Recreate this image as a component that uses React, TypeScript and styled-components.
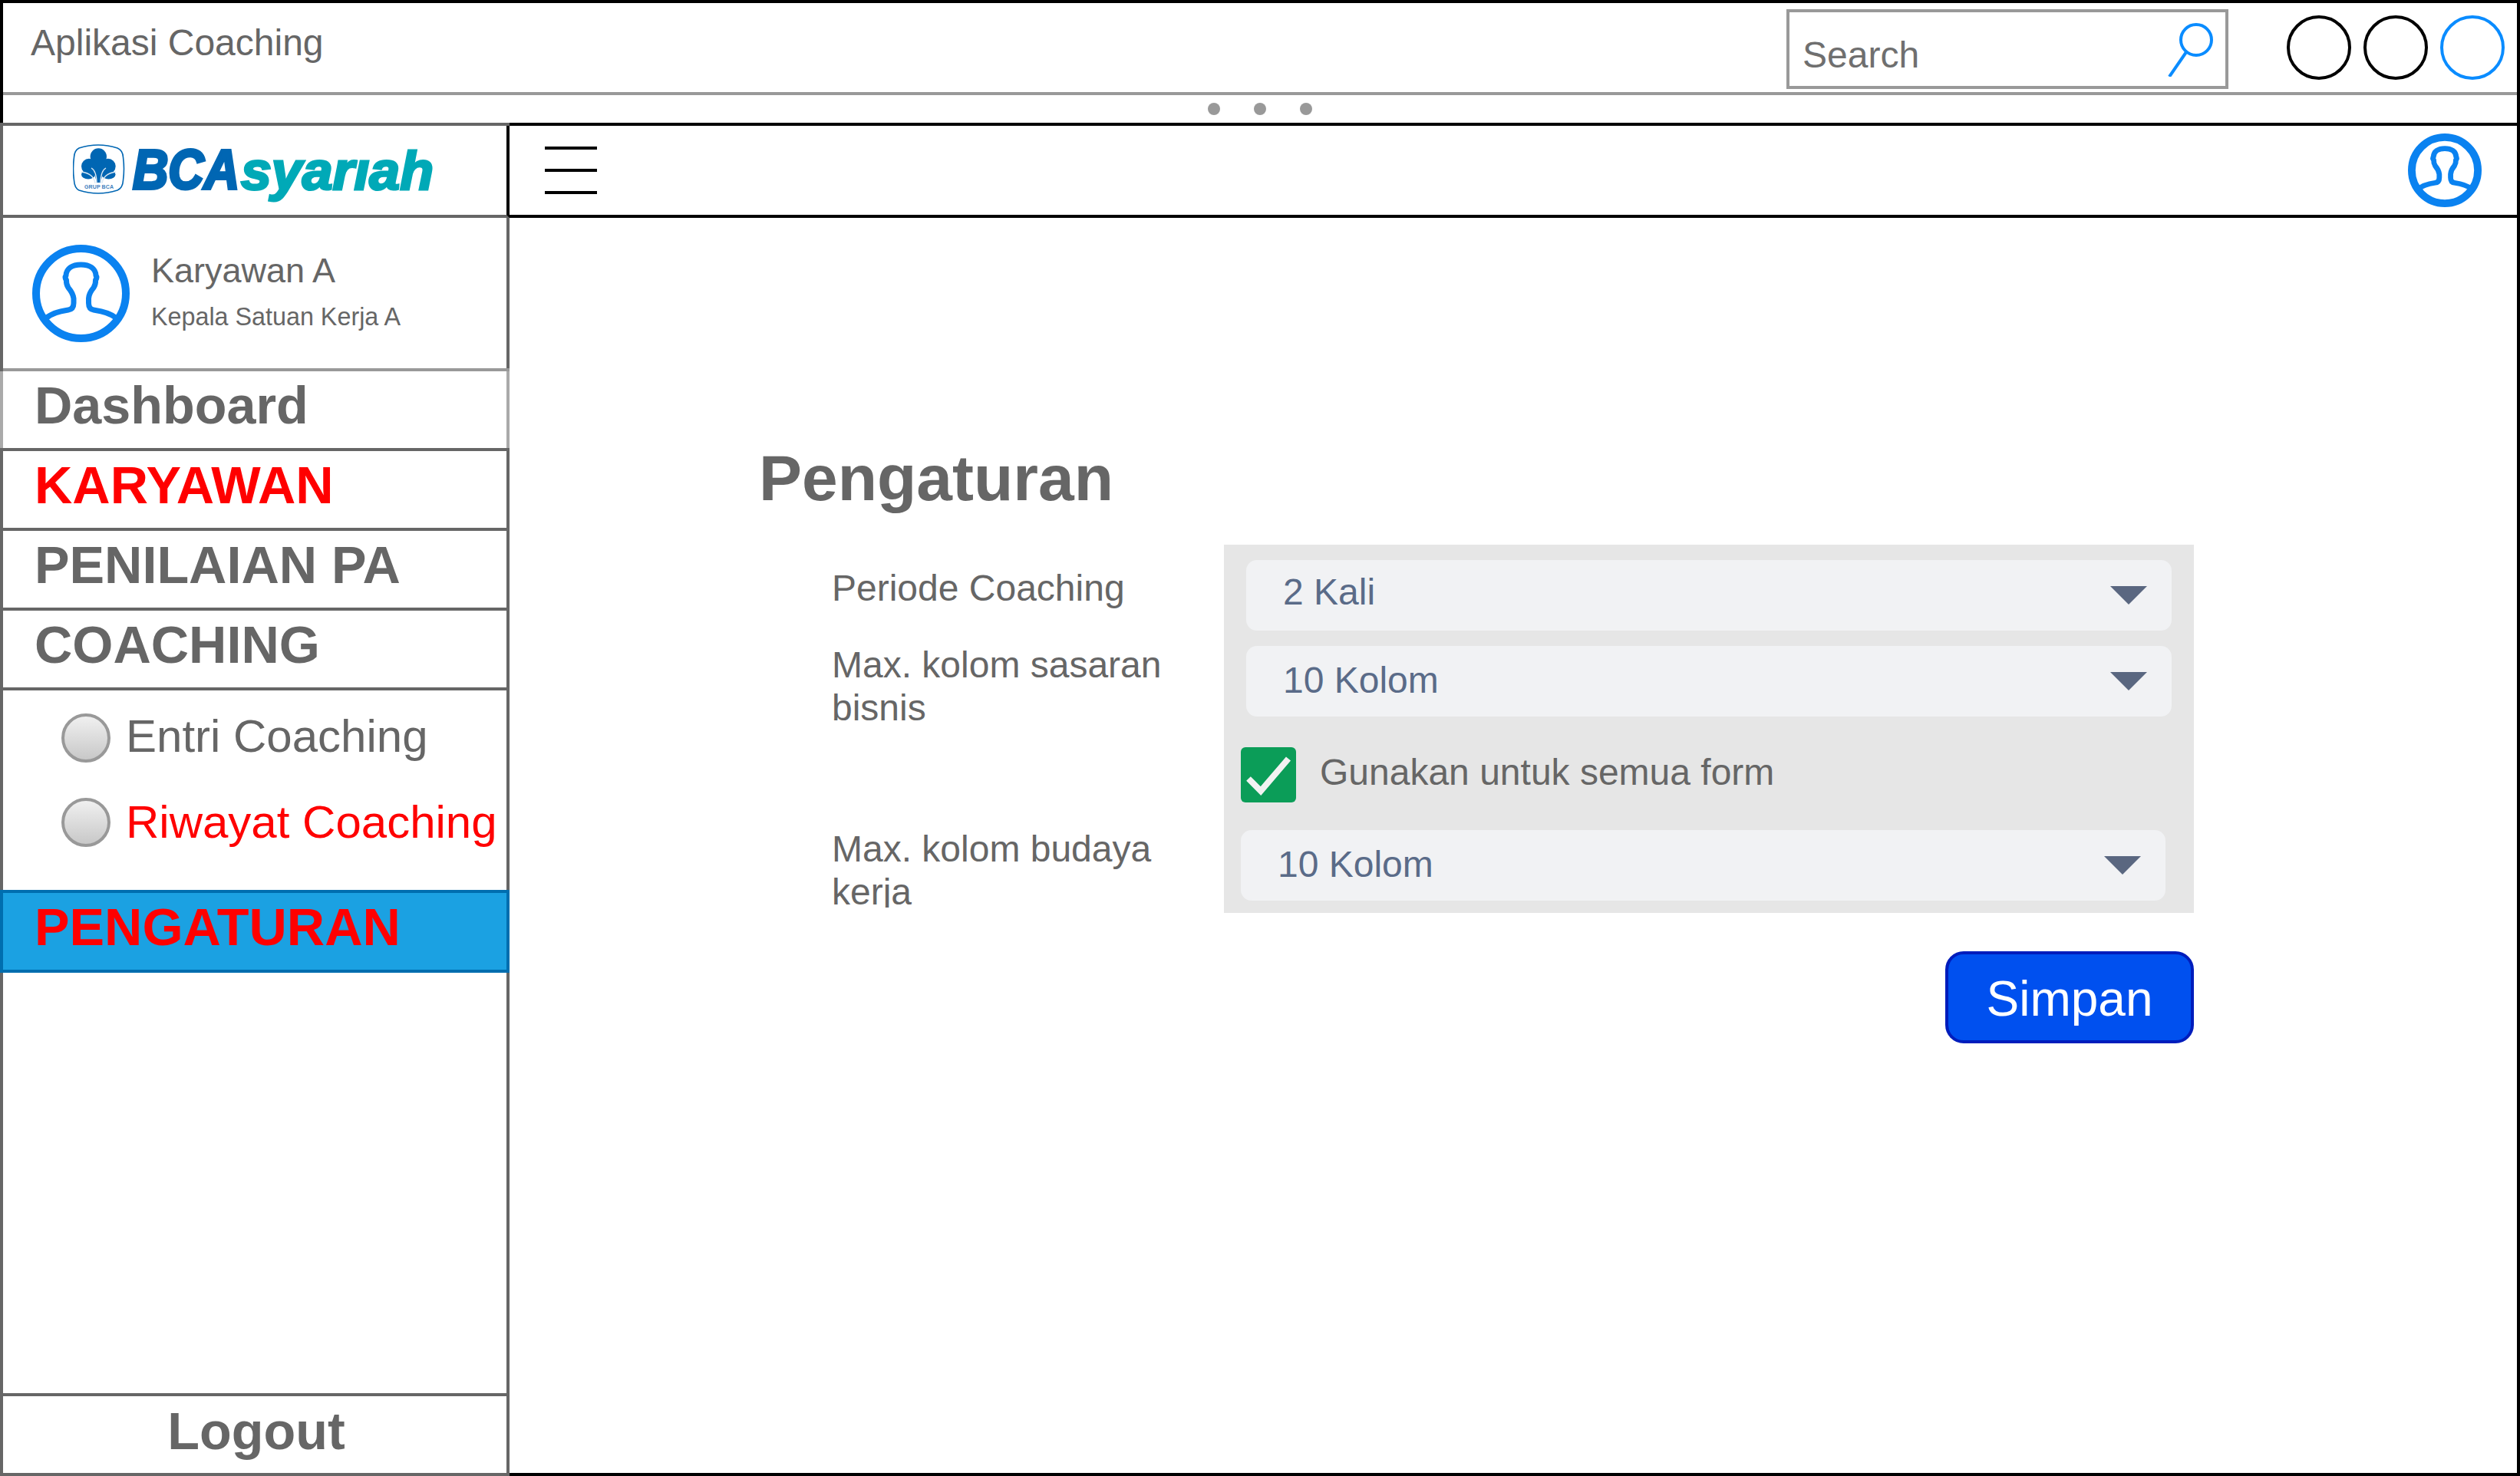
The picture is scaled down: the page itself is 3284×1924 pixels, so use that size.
import React from "react";
import styled, { createGlobalStyle } from "styled-components";

const GlobalStyle = createGlobalStyle`
  * {
    box-sizing: border-box;
  }

  html,
  body {
    margin: 0;
    padding: 0;
    background: #fff;
    font-family: "Liberation Sans", Arial, sans-serif;
    color: #666;
  }
`;

const UserIcon: React.FC<{ size: number; $heavy?: boolean }> = ({ size, $heavy }) => (
  <svg width={size} height={size} viewBox="0 0 127 127" fill="none" stroke="#0a82f0">
    <circle cx="63.5" cy="63.5" r={$heavy ? 57 : 58.5} strokeWidth={$heavy ? 13 : 10} />
    <path
      strokeWidth={$heavy ? 9 : 7}
      strokeLinejoin="round"
      d="M18 96 Q26 88 47 85 Q54 84 54 76 L54 70 Q53 63 47 56 Q44 51 44.5 46 Q42 43 44 40 C44.5 31 52 26 63.5 26 C75 26 82.5 31 83 40 Q85 43 82.5 46 Q83 51 80 56 Q74 63 73.5 70 L73.5 76 Q73.5 84 80 85 Q101 88 110 96"
    />
  </svg>
);

const SearchIcon: React.FC = () => (
  <svg width="60" height="72" viewBox="0 0 60 72" fill="none" stroke="#0a8cff" strokeWidth="4">
    <circle cx="38" cy="24" r="20" />
    <path d="M25 40 L3 72" />
  </svg>
);

const Logo: React.FC = () => (
  <svg width="475" height="84" viewBox="0 0 475 84">
    <path
      d="M8 5 Q33 -3 58 5 Q65 8 65.5 17 Q67.5 32 65.5 47 Q65 57 58 60 Q33 68 8 60 Q2 57 1.5 47 Q-0.5 32 1.5 17 Q2 8 8 5 Z"
      fill="#fff"
      stroke="#0066b3"
      strokeWidth="1.6"
    />
    <g fill="#0066b3">
      <circle cx="33.3" cy="16" r="10.7" />
      <circle cx="21" cy="28.7" r="10" />
      <circle cx="45.7" cy="28.7" r="10" />
      <ellipse cx="20" cy="39.5" rx="9" ry="6" />
      <ellipse cx="46.5" cy="39.5" rx="9" ry="6" />
      <path d="M25 26 L42 26 L36 50 L31 50 Z" />
    </g>
    <g fill="none" stroke="#dbe8f3" strokeWidth="1.3">
      <path d="M31 51 Q31 35 24 31" />
      <path d="M36 51 Q36 35 43 31" />
      <path d="M29 51 Q27 38 11 36" />
      <path d="M38 51 Q40 38 56 36" />
    </g>
    <text
      x="15"
      y="58"
      fontFamily="Liberation Sans"
      fontWeight="700"
      fontSize="7"
      fill="#3f80bd"
      textLength="38"
    >
      GRUP BCA
    </text>
    <text
      x="78"
      y="58"
      fontFamily="Liberation Sans"
      fontWeight="700"
      fontStyle="italic"
      fontSize="73"
      fill="#0066b3"
      stroke="#0066b3"
      strokeWidth="4"
      textLength="139"
      lengthAdjust="spacingAndGlyphs"
    >
      BCA
    </text>
    <text
      x="219"
      y="59"
      fontFamily="Liberation Sans"
      fontWeight="700"
      fontStyle="italic"
      fontSize="70"
      fill="#00a9b7"
      stroke="#00a9b7"
      strokeWidth="3"
      textLength="251"
      lengthAdjust="spacingAndGlyphs"
    >
      syarıah
    </text>
  </svg>
);

const menu = [
  { label: "Dashboard", plain: true },
  { label: "KARYAWAN", red: true },
  { label: "PENILAIAN PA" },
  { label: "COACHING" },
];

const subMenu = [
  { label: "Entri Coaching", lift: 5 },
  { label: "Riwayat Coaching", lift: 2, red: true },
];

const selects = {
  periode: "2 Kali",
  sasaran: "10 Kolom",
  budaya: "10 Kolom",
};

export default function App() {
  return (
    <Page>
      <GlobalStyle />
      <TitleBar>
        <AppTitle>Aplikasi Coaching</AppTitle>
        <SearchBox>
          <SearchText>Search</SearchText>
          <SearchIcon />
        </SearchBox>
        <WindowButtons>
          <WindowButton />
          <WindowButton />
          <WindowButton $accent />
        </WindowButtons>
      </TitleBar>
      <DotsBar>
        <Dot />
        <Dot />
        <Dot />
      </DotsBar>
      <Main>
        <Sidebar>
          <LogoCell>
            <Logo />
          </LogoCell>
          <Profile>
            <UserIcon size={127} />
            <ProfileInfo>
              <ProfileName>Karyawan A</ProfileName>
              <ProfileRole>Kepala Satuan Kerja A</ProfileRole>
            </ProfileInfo>
          </Profile>
          {menu.map((item) => (
            <NavItem key={item.label} $red={item.red} $light={item.plain}>
              {item.label}
            </NavItem>
          ))}
          <SubMenu>
            {subMenu.map((item) => (
              <SubItem key={item.label} $red={item.red}>
                <Radio />
                <SubLabel $lift={item.lift}>{item.label}</SubLabel>
              </SubItem>
            ))}
          </SubMenu>
          <ActiveItem>PENGATURAN</ActiveItem>
          <Logout>
            <LogoutText>Logout</LogoutText>
          </Logout>
        </Sidebar>
        <Content>
          <Header>
            <Hamburger>
              <span />
              <span />
              <span />
            </Hamburger>
            <UserIcon size={96} $heavy />
          </Header>
          <Body>
            <Heading>Pengaturan</Heading>
            <Form>
              <Labels>
                <FieldLabel $height={100}>Periode Coaching</FieldLabel>
                <FieldLabel $height={240}>
                  Max. kolom sasaran
                  <br />
                  bisnis
                </FieldLabel>
                <FieldLabel $height={104}>
                  Max. kolom budaya
                  <br />
                  kerja
                </FieldLabel>
              </Labels>
              <Panel>
                <Select>
                  <SelectValue $lift={10}>{selects.periode}</SelectValue>
                  <Caret />
                </Select>
                <Select>
                  <SelectValue $lift={3}>{selects.sasaran}</SelectValue>
                  <Caret />
                </Select>
                <CheckRow>
                  <CheckBox>
                    <svg width="72" height="72" viewBox="0 0 72 72" fill="none">
                      <path d="M10 41 L26 57 L62 15" stroke="#f2f2f2" strokeWidth="8" />
                    </svg>
                  </CheckBox>
                  <CheckLabel>Gunakan untuk semua form</CheckLabel>
                </CheckRow>
                <Select $shifted>
                  <SelectValue $lift={3}>{selects.budaya}</SelectValue>
                  <Caret />
                </Select>
              </Panel>
            </Form>
            <Actions>
              <SaveButton>Simpan</SaveButton>
            </Actions>
          </Body>
        </Content>
      </Main>
    </Page>
  );
}

const Page = styled.div`
  display: flex;
  flex-direction: column;
  width: 3284px;
  height: 1924px;
  overflow: hidden;
  background: #fff;
`;

const TitleBar = styled.div`
  display: flex;
  align-items: flex-start;
  height: 120px;
  padding: 0 16px 0 36px;
  border: 4px solid #000;
  border-bottom: none;
`;

const AppTitle = styled.div`
  margin-top: 24px;
  font-size: 48px;
  line-height: 55px;
`;

const SearchBox = styled.div`
  display: flex;
  align-items: center;
  justify-content: space-between;
  width: 576px;
  height: 104px;
  margin: 8px 0 0 auto;
  padding: 0 16px 0 17px;
  border: 4px solid #999;
`;

const SearchText = styled.span`
  padding-top: 15px;
  font-size: 48px;
  color: #6f6f6f;
`;

const WindowButtons = styled.div`
  display: flex;
  gap: 16px;
  margin: 16px 0 0 76px;
`;

const WindowButton = styled.div<{ $accent?: boolean }>`
  width: 84px;
  height: 84px;
  border: 4px solid ${(p) => (p.$accent ? "#0a8cff" : "#000")};
  border-radius: 50%;
`;

const DotsBar = styled.div`
  display: flex;
  align-items: center;
  justify-content: center;
  gap: 44px;
  height: 40px;
  padding-top: 4px;
  border-left: 4px solid #000;
  border-right: 4px solid #000;
  box-shadow: inset 0 4px 0 #999;
`;

const Dot = styled.div`
  width: 16px;
  height: 16px;
  border-radius: 50%;
  background: #999;
`;

const Main = styled.div`
  display: flex;
  flex: 1;
  min-height: 0;
`;

const Sidebar = styled.aside`
  display: flex;
  flex-direction: column;
  width: 664px;
  border: 4px solid #666;
`;

const LogoCell = styled.div`
  height: 120px;
  margin-right: -4px;
  padding: 24px 0 0 91px;
  border-right: 4px solid #000;
  border-bottom: 4px solid #666;
`;

const Profile = styled.div`
  display: flex;
  align-items: center;
  gap: 28px;
  height: 200px;
  margin-right: -4px;
  padding-left: 38px;
  border-bottom: 4px solid #999;
  box-shadow: inset -4px 0 0 #666;
`;

const ProfileInfo = styled.div`
  padding-bottom: 3px;
`;

const ProfileName = styled.div`
  font-size: 45px;
  line-height: 50px;
`;

const ProfileRole = styled.div`
  margin-top: 15px;
  font-size: 32.3px;
  line-height: 40px;
`;

const NavItem = styled.div<{ $red?: boolean; $light?: boolean }>`
  display: flex;
  align-items: center;
  flex: none;
  height: 104px;
  margin: 0 ${(p) => (p.$light ? "-4px" : "0")};
  padding: 0 0 12px ${(p) => (p.$light ? "45px" : "41px")};
  border-bottom: 4px solid #666;
  box-shadow: ${(p) => (p.$light ? "inset 4px 0 0 #aaa, inset -4px 0 0 #aaa" : "none")};
  font-size: 68.3px;
  font-weight: 700;
  color: ${(p) => (p.$red ? "#f00" : "#666")};
`;

const SubMenu = styled.div`
  display: flex;
  flex-direction: column;
  gap: 46px;
  height: 260px;
  padding: 30px 0 0 76px;
`;

const SubItem = styled.div<{ $red?: boolean }>`
  display: flex;
  align-items: center;
  gap: 20px;
  height: 64px;
  font-size: 60px;
  white-space: nowrap;
  color: ${(p) => (p.$red ? "#f00" : "#666")};
`;

const SubLabel = styled.span<{ $lift: number }>`
  padding-bottom: ${(p) => p.$lift}px;
`;

const Radio = styled.span`
  flex: none;
  width: 64px;
  height: 64px;
  border: 4px solid #999;
  border-radius: 50%;
  background: linear-gradient(#f0f0f0, #c8c8c8);
`;

const ActiveItem = styled.div`
  display: flex;
  align-items: center;
  height: 108px;
  margin: 0 -4px;
  padding: 0 0 12px 41px;
  border: 4px solid #006eaf;
  background: #1ba1e2;
  font-size: 68.3px;
  font-weight: 700;
  color: #f00;
`;

const Logout = styled.div`
  display: flex;
  align-items: center;
  justify-content: center;
  height: 104px;
  margin-top: auto;
  padding: 0 0 10px 4px;
  border-top: 4px solid #666;
`;

const LogoutText = styled.span`
  font-size: 68.3px;
  font-weight: 700;
`;

const Content = styled.main`
  display: flex;
  flex: 1;
  flex-direction: column;
  border: 4px solid #000;
  border-left: none;
`;

const Header = styled.div`
  display: flex;
  align-items: center;
  justify-content: space-between;
  flex: none;
  height: 120px;
  padding: 0 46px;
  border-bottom: 4px solid #000;
`;

const Hamburger = styled.div`
  display: flex;
  flex-direction: column;
  gap: 25px;
  width: 68px;

  span {
    height: 4px;
    background: #000;
  }
`;

const Body = styled.div`
  width: 2195px;
  padding: 291px 0 0 325px;
`;

const Heading = styled.h1`
  margin: 0 0 39px;
  font-size: 84px;
  line-height: 96px;
  font-weight: 700;
`;

const Form = styled.div`
  display: flex;
`;

const Labels = styled.div`
  flex: 1;
  padding: 29px 0 0 95px;
`;

const FieldLabel = styled.div<{ $height: number }>`
  height: ${(p) => p.$height}px;
  overflow: hidden;
  font-size: 48px;
  line-height: 56px;
`;

const Panel = styled.div`
  display: flex;
  flex-direction: column;
  gap: 20px;
  width: 1264px;
  height: 480px;
  padding-top: 20px;
  background: #e6e6e6;
`;

const Select = styled.div<{ $shifted?: boolean }>`
  display: flex;
  align-items: center;
  justify-content: space-between;
  height: 92px;
  margin: ${(p) => (p.$shifted ? "0 37px 0 22px" : "0 29px")};
  padding: 0 32px 0 48px;
  border-radius: 14px;
  background: #f1f2f4;
`;

const SelectValue = styled.span<{ $lift: number }>`
  padding-bottom: ${(p) => p.$lift}px;
  font-size: 48px;
  color: #5a6b88;
`;

const Caret = styled.span`
  width: 0;
  height: 0;
  border-top: 24px solid #5a6780;
  border-left: 24px solid transparent;
  border-right: 24px solid transparent;
`;

const CheckRow = styled.div`
  display: flex;
  align-items: center;
  gap: 31px;
  height: 72px;
  margin: 20px 0 16px 22px;
`;

const CheckBox = styled.div`
  width: 72px;
  height: 72px;
  border-radius: 6px;
  background: #0b9d58;

  svg {
    display: block;
  }
`;

const CheckLabel = styled.span`
  padding-bottom: 7px;
  font-size: 48px;
`;

const Actions = styled.div`
  display: flex;
  justify-content: flex-end;
  margin-top: 50px;
`;

const SaveButton = styled.button`
  width: 324px;
  height: 120px;
  padding: 3px 0 0;
  border: 4px solid #001dbc;
  border-radius: 24px;
  background: #0050ef;
  font-family: "Liberation Sans", Arial, sans-serif;
  font-size: 64px;
  color: #fff;
`;
